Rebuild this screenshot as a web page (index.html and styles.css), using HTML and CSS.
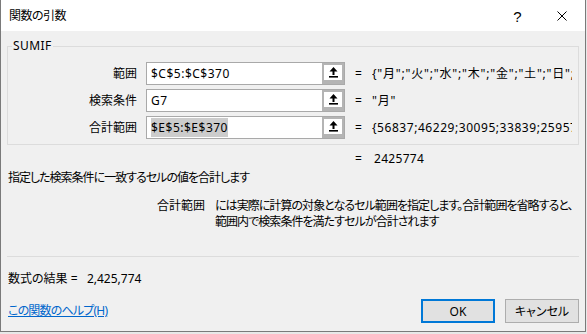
FILE: index.html
```html
<!DOCTYPE html>
<html lang="ja">
<head>
  <meta charset="UTF-8" />
  <title>関数の引数</title>
  <link rel="stylesheet" href="styles.css">
</head>
<body>

  <div class="dialog">
    <div class="titlebar">
      <span class="title">関数の引数</span>
      <span class="tb-btn tb-help">?</span>
      <span class="tb-btn tb-close">
        <svg width="10" height="10" viewBox="0 0 10 10"><path d="M0.5 0.5L9.5 9.5M9.5 0.5L0.5 9.5" stroke="#000" stroke-width="1" fill="none"/></svg>
      </span>
    </div>

    <div class="content">
      <div class="group">
        <span class="group-title">SUMIF</span>

        <div class="arg-row">
          <span class="arg-label">範囲</span>
          <div class="ref-box">
            <span class="ref-text">$C$5:$C$370</span>
            <span class="ref-btn"><svg width="9" height="11" viewBox="0 0 9 11"><path d="M4.5 0L0.5 4.5H3.5V8H5.5V4.5H8.5Z" fill="#000"/><rect x="0" y="9" width="9" height="1.6" fill="#000"/></svg></span>
          </div>
          <span class="eq">=</span>
          <span class="arg-value days">{"月";"火";"水";"木";"金";"土";"日";"月";"火";"水";"木";"金"}</span>
        </div>

        <div class="arg-row">
          <span class="arg-label">検索条件</span>
          <div class="ref-box">
            <span class="ref-text">G7</span>
            <span class="ref-btn"><svg width="9" height="11" viewBox="0 0 9 11"><path d="M4.5 0L0.5 4.5H3.5V8H5.5V4.5H8.5Z" fill="#000"/><rect x="0" y="9" width="9" height="1.6" fill="#000"/></svg></span>
          </div>
          <span class="eq">=</span>
          <span class="arg-value days">"月"</span>
        </div>

        <div class="arg-row">
          <span class="arg-label">合計範囲</span>
          <div class="ref-box">
            <span class="ref-text"><span class="selected">$E$5:$E$370</span></span>
            <span class="ref-btn"><svg width="9" height="11" viewBox="0 0 9 11"><path d="M4.5 0L0.5 4.5H3.5V8H5.5V4.5H8.5Z" fill="#000"/><rect x="0" y="9" width="9" height="1.6" fill="#000"/></svg></span>
          </div>
          <span class="eq">=</span>
          <span class="arg-value num">{56837;46229;30095;33839;25957;41022;38815;29744}</span>
        </div>
      </div>

      <div class="total-row">
        <span class="eq">=</span>
        <span class="total-value">2425774</span>
      </div>

      <p class="func-desc">指定した検索条件に一致するセルの値を合計します</p>

      <div class="arg-help">
        <span class="arg-help-name">合計範囲</span>
        <span class="arg-help-text">には実際に計算の対象となるセル範囲を指定します。合計範囲を省略すると、<br>範囲内で検索条件を満たすセルが合計されます</span>
      </div>

      <div class="sep"></div>

      <div class="result">数式の結果 =&nbsp;&nbsp;&nbsp;2,425,774</div>

      <div class="footer">
        <a class="help-link" href="#">この関数のヘルプ(H)</a>
        <div class="buttons">
          <button class="btn btn-ok">OK</button>
          <button class="btn">キャンセル</button>
        </div>
      </div>
    </div>
  </div>

</body>
</html>
```

FILE: styles.css
```css
* {
  box-sizing: border-box;
}

html {
  background: #e8e8e8;
}

body {
  margin: 0;
  font-family: 'Noto Sans', 'Noto Sans CJK JP', sans-serif;
  font-size: 12px;
  font-feature-settings: "palt";
  color: #000;
}

.dialog {
  width: 586px;
  height: 332px;
  background: #f0f0f0;
  border: 1px solid #7a7a7a;
  border-top: none;
  display: flex;
  flex-direction: column;
}

.titlebar {
  height: 31px;
  background: #fff;
  display: flex;
  align-items: center;
  flex-shrink: 0;
}

.title {
  flex: 1;
  padding-left: 8px;
  line-height: 16px;
  letter-spacing: -0.5px;
}

.tb-btn {
  width: 46px;
  height: 31px;
  display: flex;
  align-items: center;
  justify-content: center;
}

.tb-help {
  font-size: 15px;
  font-family: 'Liberation Sans', sans-serif;
  padding-top: 1px;
  padding-left: 3px;
}

.content {
  flex: 1;
  padding: 0 6px;
  display: flex;
  flex-direction: column;
}

.group {
  position: relative;
  margin-top: 15px;
  border: 1px solid #dcdcdc;
  padding: 15px 0 5px;
  display: flex;
  flex-direction: column;
  gap: 4px;
}

.group-title {
  position: absolute;
  top: -8px;
  left: 4px;
  padding: 0 1px;
  line-height: 14px;
  background: #f0f0f0;
  letter-spacing: 0.4px;
}

.arg-row {
  display: flex;
  align-items: center;
  height: 23px;
}

.arg-label {
  width: 129px;
  text-align: right;
  margin-right: 9px;
  line-height: 16px;
}

.ref-box {
  width: 199px;
  height: 23px;
  display: flex;
  border: 1px solid #a9a9a9;
  background: #fff;
}

.ref-text {
  flex: 1;
  padding-left: 4px;
  line-height: 21px;
  white-space: nowrap;
  overflow: hidden;
  letter-spacing: 0.5px;
}

.selected {
  background: #cccccc;
  padding: 1px 0;
}

.ref-btn {
  width: 22px;
  height: 21px;
  border: 2px solid #b4b4b4;
  border-bottom-width: 4px;
  background: #fff;
  display: flex;
  align-items: center;
  justify-content: center;
}

.eq {
  width: 27px;
  text-align: center;
  line-height: 16px;
}

.arg-value {
  width: 200px;
  white-space: nowrap;
  overflow: hidden;
  line-height: 16px;
}

.arg-value.days {
  letter-spacing: 0.8px;
}

.arg-value.num {
  letter-spacing: 0.55px;
}

.total-row {
  display: flex;
  margin-top: 6px;
  padding-left: 338px;
  line-height: 16px;
}

.total-value {
  padding-left: 2px;
  letter-spacing: 0.3px;
}

.func-desc {
  margin: 3px 0 0;
  padding-left: 1px;
  line-height: 16px;
  letter-spacing: -1px;
}

.arg-help {
  display: flex;
  margin-top: 12px;
  line-height: 16px;
}

.arg-help-name {
  width: 198px;
  text-align: right;
  margin-right: 10px;
  flex-shrink: 0;
}

.arg-help-text {
  white-space: nowrap;
  letter-spacing: -0.95px;
}

.sep {
  margin-top: 26px;
  height: 1px;
  background: #dcdcdc;
}

.result {
  margin-top: 14px;
  padding-left: 1px;
  line-height: 16px;
}

.footer {
  margin-top: 12px;
  display: flex;
  align-items: center;
  justify-content: space-between;
}

.help-link {
  color: #0066cc;
  text-decoration: underline;
  padding-left: 1px;
  line-height: 16px;
  letter-spacing: -0.8px;
}

.buttons {
  display: flex;
  gap: 10px;
}

.btn {
  width: 74px;
  height: 24px;
  font: inherit;
  color: #000;
  background: #e1e1e1;
  border: 1px solid #adadad;
  padding: 0;
}

.btn-ok {
  border: 2px solid #0078d7;
}
```
